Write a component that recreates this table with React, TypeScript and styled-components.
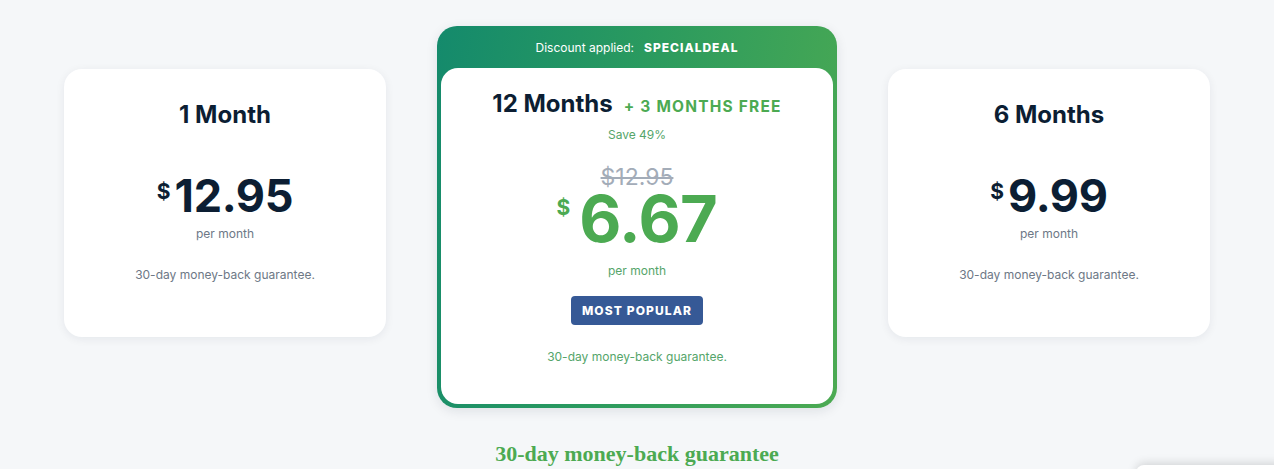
import React from "react";
import styled, { createGlobalStyle } from "styled-components";

const Global = createGlobalStyle`
  html, body { margin: 0; padding: 0; }
  body {
    background: #f5f7f9;
    font-family: Inter, "Noto Sans", sans-serif;
    overflow: hidden;
  }
`;

const Page = styled.div`
  position: relative;
  height: 469px;
  padding-top: 26px;
  box-sizing: border-box;
`;

const Plans = styled.div`
  display: flex;
  justify-content: center;
  align-items: flex-start;
  gap: 51px;
`;

const SideCard = styled.div`
  width: 322px;
  height: 268px;
  margin-top: 43px;
  background: #fff;
  border-radius: 18px;
  box-shadow: 0 2px 10px rgba(20, 30, 50, 0.07);
  display: flex;
  flex-direction: column;
  align-items: center;
  padding-top: 31px;
  box-sizing: border-box;
`;

const FeaturedCard = styled.div`
  width: 400px;
  height: 382px;
  border-radius: 20px;
  background: linear-gradient(100deg, #148a6c 0%, #2a9a5f 45%, #4caa52 100%);
  padding: 0 4px 4px;
  box-sizing: border-box;
  display: flex;
  flex-direction: column;
  box-shadow: 0 3px 12px rgba(20, 30, 50, 0.1);
`;

const Banner = styled.div`
  height: 42px;
  display: flex;
  align-items: center;
  justify-content: center;
  gap: 10px;
  color: #fff;
  font-size: 12px;
`;

const Code = styled.span`
  font-weight: 800;
  font-size: 12px;
  letter-spacing: 1px;
`;

const Inner = styled.div`
  flex: 1;
  background: #fff;
  border-radius: 17px;
  display: flex;
  flex-direction: column;
  align-items: center;
  padding-top: 21px;
`;

const TitleRow = styled.div`
  display: flex;
  align-items: baseline;
  gap: 11px;
`;

const Title = styled.div`
  font-size: 24px;
  font-weight: 700;
  color: #0c1e33;
  line-height: 30px;
`;

const Free = styled.span`
  font-size: 15.5px;
  font-weight: 700;
  letter-spacing: 1.2px;
  color: #4caa52;
`;

const Save = styled.div`
  margin-top: 8px;
  font-size: 12px;
  color: #55a56a;
  line-height: 16px;
`;

const OldPrice = styled.div`
  margin-top: 24px;
  font-size: 23px;
  color: #a3acb8;
  text-decoration: line-through;
  text-decoration-thickness: 2px;
  line-height: 20px;
`;

const PriceRow = styled.div<{ $featured?: boolean }>`
  display: flex;
  align-items: flex-start;
  gap: ${(p) => (p.$featured ? "9px" : "4px")};
  color: ${(p) => (p.$featured ? "#4caa52" : "#0c1e33")};
  margin-top: ${(p) => (p.$featured ? "4px" : "42px")};
`;

const Currency = styled.span<{ $featured?: boolean }>`
  font-weight: 700;
  font-size: 21px;
  line-height: 1;
  margin-top: ${(p) => (p.$featured ? "6px" : "9px")};
`;

const Amount = styled.span<{ $featured?: boolean }>`
  font-weight: 700;
  font-size: ${(p) => (p.$featured ? "65px" : "45px")};
  line-height: ${(p) => (p.$featured ? "56px" : "48px")};
  letter-spacing: ${(p) => (p.$featured ? "-0.5px" : "-0.3px")};
`;

const Per = styled.div<{ $featured?: boolean }>`
  font-size: 12px;
  line-height: 16px;
  margin-top: ${(p) => (p.$featured ? "16px" : "6px")};
  color: ${(p) => (p.$featured ? "#55a56a" : "#6d7886")};
`;

const Guarantee = styled.div<{ $featured?: boolean }>`
  font-size: 12px;
  line-height: 16px;
  margin-top: ${(p) => (p.$featured ? "24px" : "25px")};
  color: ${(p) => (p.$featured ? "#55a56a" : "#6d7886")};
`;

const Badge = styled.div`
  margin-top: 17px;
  background: #365996;
  color: #fff;
  font-size: 12px;
  font-weight: 800;
  letter-spacing: 1.1px;
  height: 29px;
  padding: 0 11px;
  display: flex;
  align-items: center;
  border-radius: 4px;
`;

const Footer = styled.div`
  margin-top: 33px;
  text-align: center;
  font-family: "Liberation Serif", "DejaVu Serif", serif;
  font-weight: 700;
  font-size: 22px;
  color: #4caa52;
`;

const Widget = styled.div`
  position: absolute;
  left: 1136px;
  top: 465px;
  width: 150px;
  height: 40px;
  background: #fff;
  border-radius: 8px;
  box-shadow: 0 -2px 10px rgba(0, 0, 0, 0.14);
`;

type Plan = { title: string; price: string };

const Side = ({ title, price }: Plan) => (
  <SideCard>
    <Title>{title}</Title>
    <PriceRow>
      <Currency>$</Currency>
      <Amount>{price}</Amount>
    </PriceRow>
    <Per>per month</Per>
    <Guarantee>30-day money-back guarantee.</Guarantee>
  </SideCard>
);

export default function App() {
  return (
    <Page>
      <Global />
      <Plans>
        <Side title="1 Month" price="12.95" />
        <FeaturedCard>
          <Banner>
            <span>Discount applied:</span>
            <Code>SPECIALDEAL</Code>
          </Banner>
          <Inner>
            <TitleRow>
              <Title>12 Months</Title>
              <Free>+ 3 MONTHS FREE</Free>
            </TitleRow>
            <Save>Save 49%</Save>
            <OldPrice>$12.95</OldPrice>
            <PriceRow $featured>
              <Currency $featured>$</Currency>
              <Amount $featured>6.67</Amount>
            </PriceRow>
            <Per $featured>per month</Per>
            <Badge>MOST POPULAR</Badge>
            <Guarantee $featured>30-day money-back guarantee.</Guarantee>
          </Inner>
        </FeaturedCard>
        <Side title="6 Months" price="9.99" />
      </Plans>
      <Footer>30-day money-back guarantee</Footer>
      <Widget />
    </Page>
  );
}
